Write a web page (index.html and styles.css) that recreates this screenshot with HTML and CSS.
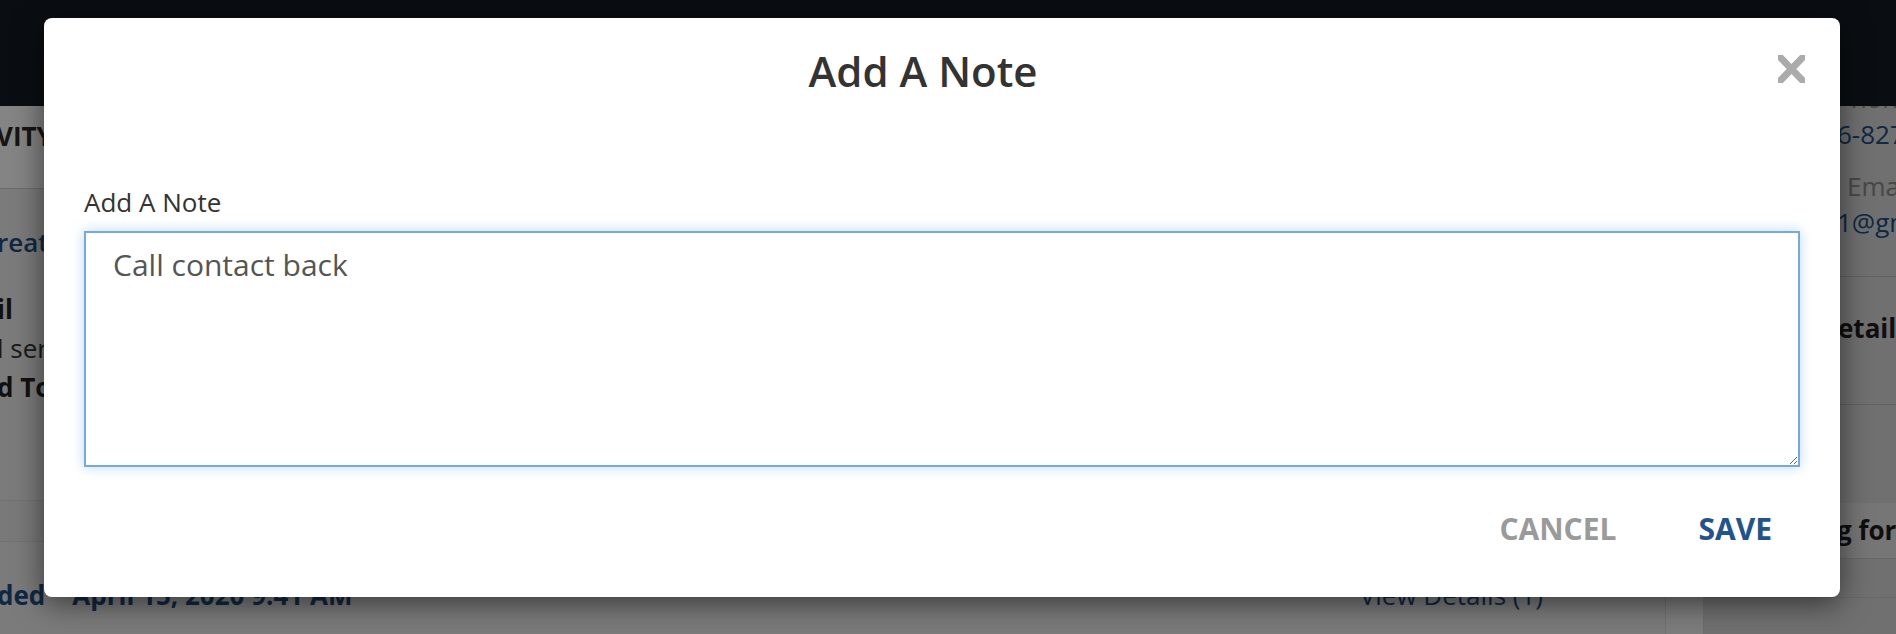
FILE: index.html
```html
<!DOCTYPE html>
<html lang="en">
<head>
<meta charset="utf-8">
<title>Add A Note</title>
<link rel="stylesheet" href="styles.css">
</head>
<body>
<div class="page">
  <header class="topbar"></header>
  <div class="main">
    <section class="activity">
      <div class="act-head"><h2 class="act-title">VITY</h2></div>
      <div class="act-item">
        <div class="act-created">reat</div>
        <div class="act-line act-bold">il</div>
        <div class="act-line act-text">l ser</div>
        <div class="act-line act-bold">d To</div>
      </div>
      <div class="act-band"></div>
      <div class="act-foot">
        <span class="act-date">ded<span class="act-when">April 15, 2020 9:41 AM</span></span>
        <span class="act-link">View Details (1)</span>
      </div>
    </section>
    <div class="gutter"></div>
    <aside class="sidebar">
      <div class="side-label side-first">Phone</div>
      <div class="side-value">6-8275</div>
      <div class="side-label side-email">Email</div>
      <div class="side-value">1@gmail.com</div>
      <div class="side-section"><span class="side-bold">etails</span></div>
      <div class="side-spacer"></div>
      <div class="side-band"><span class="side-bold">g for</span></div>
      <div class="side-rest"></div>
    </aside>
  </div>
</div>
<div class="overlay"></div>
<div class="modal" role="dialog" aria-label="Add A Note">
  <div class="modal-header">
    <h1 class="modal-title">Add A Note</h1>
    <button class="modal-close" aria-label="Close">
      <svg width="27" height="28" viewBox="0 0 27 28"><path d="M0 0 L27 28 M27 0 L0 28" stroke="#ababab" stroke-width="7" fill="none"/></svg>
    </button>
  </div>
  <div class="modal-body">
    <label class="note-label" for="note">Add A Note</label>
    <textarea id="note" class="note-input">Call contact back</textarea>
  </div>
  <div class="modal-footer">
    <button class="btn btn-cancel">Cancel</button>
    <button class="btn btn-save">Save</button>
  </div>
</div>
</body>
</html>
```
FILE: styles.css
```css
html, body {
  margin: 0;
  padding: 0;
}
body {
  width: 1896px;
  height: 634px;
  overflow: hidden;
  position: relative;
  font-family: "Open Sans", "Liberation Sans", sans-serif;
  background: #ececec;
}
.page {
  display: flex;
  flex-direction: column;
  height: 634px;
}
.topbar {
  height: 106px;
  background: #151b24;
  flex: none;
}
.main {
  flex: 1;
  display: flex;
  overflow: hidden;
}
.activity {
  width: 1666px;
  flex: none;
  background: #ebebeb;
  border-right: 1px solid #d8d8d8;
  box-sizing: border-box;
}
.act-head {
  height: 83px;
  background: #fdfdfd;
  border-bottom: 1px solid #d0d0d0;
  box-sizing: border-box;
  padding-top: 12px;
}
.act-title {
  margin: 0 0 0 -4px;
  font: 700 26px/36px "Open Sans", sans-serif;
  color: #2a2a2a;
}
.act-item {
  height: 312px;
  box-sizing: border-box;
  padding-top: 35px;
  border-bottom: 1px solid #dadada;
}
.act-created {
  margin-left: -3px;
  font: 600 26px/36px "Open Sans", sans-serif;
  color: #1d4d80;
  margin-bottom: 30px;
}
.act-line {
  margin-left: -3px;
  font-size: 26px;
  line-height: 39px;
}
.act-bold {
  font-weight: 700;
  color: #222;
}
.act-text {
  font-weight: 400;
  color: #333;
}
.act-band {
  height: 40px;
  border-bottom: 1px solid #dadada;
  background: #e9e9e9;
}
.act-foot {
  display: flex;
  justify-content: space-between;
  padding: 35px 122px 0 0;
  font-size: 26px;
  line-height: 36px;
}
.act-date {
  margin-left: -3px;
  font-weight: 700;
  color: #1d4d80;
}
.act-when {
  margin-left: 27px;
}
.act-link {
  color: #1d4d80;
}
.gutter {
  width: 37px;
  flex: none;
  background: #f0f0f0;
  border-right: 1px solid #d4d4d4;
}
.sidebar {
  flex: 1;
  background: #d6d6d6;
  padding-left: 131px;
  font-size: 26px;
  line-height: 36px;
  white-space: nowrap;
}
.side-label {
  color: #8a8a8a;
}
.side-first {
  margin-top: -26px;
}
.side-email {
  margin-top: 16px;
  padding-left: 12px;
}
.side-value {
  color: #1d4d80;
  padding-left: 2px;
}
.side-section {
  margin-top: 36px;
  margin-left: -131px;
  padding: 33px 0 58px 134px;
  border-top: 1px solid #bdbdbd;
  border-bottom: 1px solid #bdbdbd;
}
.side-bold {
  font-weight: 700;
  color: #1e1e1e;
}
.side-spacer {
  height: 98px;
}
.side-band {
  margin-left: -131px;
  padding: 9px 0 10px 133px;
  background: #e2e2e2;
  border-bottom: 1px solid #c8c8c8;
}
.side-rest {
  margin-left: -131px;
  height: 38px;
  border-bottom: 1px solid #c8c8c8;
}
.overlay {
  position: absolute;
  inset: 0;
  background: rgba(0, 0, 0, 0.48);
}
.modal {
  position: absolute;
  left: 44px;
  top: 18px;
  width: 1796px;
  height: 579px;
  box-sizing: border-box;
  background: #fff;
  border-radius: 8px;
  box-shadow: 0 6px 30px rgba(0, 0, 0, 0.55);
  padding-top: 28px;
}
.modal-header {
  display: flex;
  align-items: flex-start;
  padding: 0 35px 0 40px;
}
.modal-title {
  flex: 1;
  margin: 0;
  text-align: center;
  font: 600 42px/50px "Open Sans", sans-serif;
  color: #333;
}
.modal-close {
  width: 43px;
  margin-top: 9px;
  padding: 0;
  border: 0;
  background: none;
  display: flex;
  justify-content: flex-end;
}
.modal-close svg {
  display: block;
}
.modal-body {
  padding: 88px 40px 0;
}
.note-label {
  display: block;
  font: 400 26px/36px "Open Sans", sans-serif;
  color: #333;
  margin-bottom: 11px;
}
.note-input {
  display: block;
  width: 100%;
  height: 236px;
  box-sizing: border-box;
  margin: 0;
  border: 2px solid #74aae0;
  border-radius: 0;
  padding: 11px 27px;
  font: 400 30px/42px "Open Sans", sans-serif;
  color: #555;
  box-shadow: 0 0 12px rgba(102, 170, 233, 0.45);
  outline: none;
}
.modal-footer {
  display: flex;
  justify-content: flex-end;
  gap: 26px;
  padding: 31px 40px 0;
}
.btn {
  background: none;
  border: 0;
  padding: 10px 28px;
  font: 700 30px/42px "Open Sans", sans-serif;
  text-transform: uppercase;
  cursor: pointer;
}
.btn-cancel {
  color: #9a9a9a;
}
.btn-save {
  color: #22538c;
}
```
